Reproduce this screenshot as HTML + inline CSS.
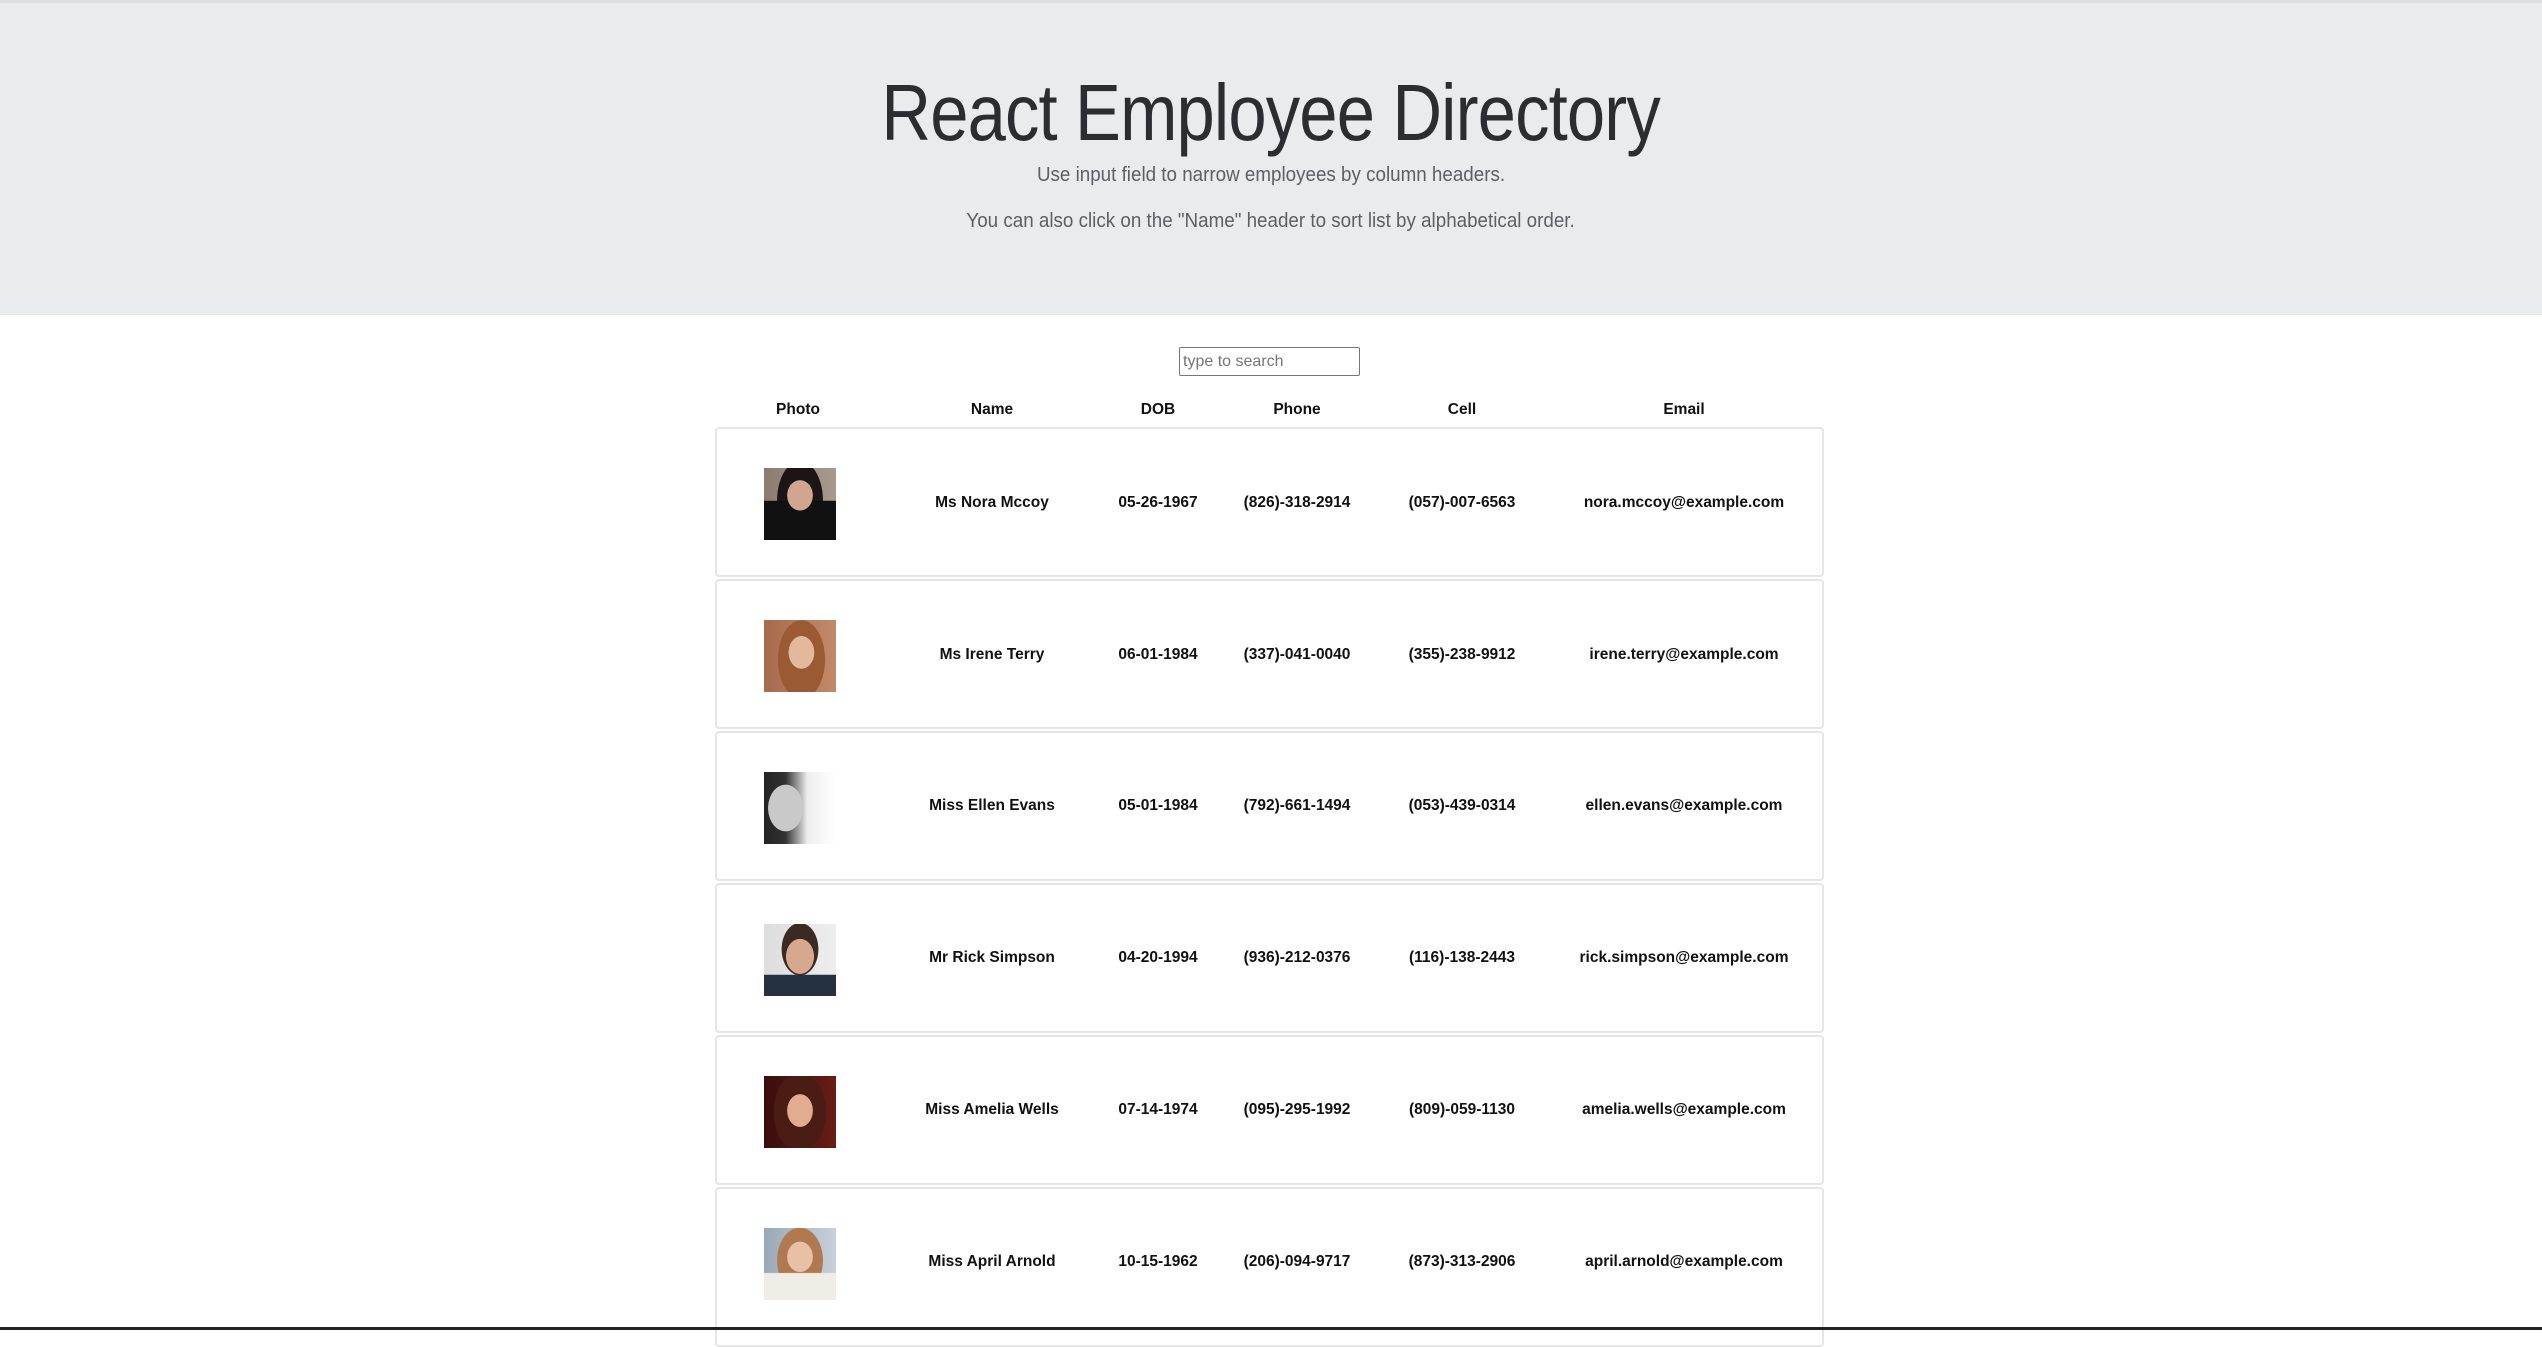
<!DOCTYPE html>
<html><head><meta charset="utf-8"><style>
*{margin:0;padding:0;box-sizing:border-box}
body{width:2542px;height:1330px;overflow:hidden;background:#fff;font-family:"Liberation Sans",sans-serif;color:#212529;position:relative}
.hd{position:absolute;left:0;top:0;width:2542px;height:315px;background:#e9ecef;border-top:3px solid #dcdfe3}
.t{position:absolute;left:0;width:2542px;text-align:center;white-space:nowrap}
h1{display:inline-block;font-size:80px;font-weight:300;color:#2a2d31;letter-spacing:-1px;transform:scaleX(0.86)}
.s{font-size:20px;color:#5a6066}
.s span{display:inline-block;transform:scaleX(0.94)}
input{position:absolute;left:1179px;top:347px;width:181px;height:29px;border:1px solid #767676;border-radius:2px;font:16px "Liberation Sans",sans-serif;padding-left:3px;color:#757575}
.c{position:absolute;transform:translate(-50%,-50%);font-weight:bold;font-size:15.5px;white-space:nowrap;color:#111}
.row{position:absolute;left:715px;width:1109px;height:150px;border:2px solid #e6e6e6;border-radius:4px}
.p{position:absolute;left:47px;top:39px;width:72px;height:72px}
.bl{position:absolute;left:0;bottom:0;width:2542px;height:3px;background:#222}
</style></head><body>
<div class="hd"></div>
<div class="t" style="top:67px"><h1>React Employee Directory</h1></div>
<div class="t s" style="top:164px"><span>Use input field to narrow employees by column headers.</span></div>
<div class="t s" style="top:210px"><span>You can also click on the "Name" header to sort list by alphabetical order.</span></div>
<input value="type to search">
<div class="c" style="left:798px;top:410px">Photo</div>
<div class="c" style="left:992px;top:410px">Name</div>
<div class="c" style="left:1158px;top:410px">DOB</div>
<div class="c" style="left:1297px;top:410px">Phone</div>
<div class="c" style="left:1462px;top:410px">Cell</div>
<div class="c" style="left:1684px;top:410px">Email</div>

<div class="row" style="top:427px"><div class="p" style="background-image:radial-gradient(ellipse 22% 26% at 50% 38%,#d2a58e 80%,transparent 82%),linear-gradient(180deg,transparent 45%,#111 46%),radial-gradient(ellipse 35% 60% at 50% 45%,#1b1515 90%,transparent 92%),linear-gradient(90deg,#8c7c70,#a89a8c)"></div></div>
<div class="row" style="top:579px"><div class="p" style="background-image:radial-gradient(ellipse 22% 28% at 52% 45%,#e3b99c 80%,transparent 82%),radial-gradient(ellipse 36% 60% at 52% 55%,#9a5a34 90%,transparent 92%),linear-gradient(90deg,#a86a4c,#c28a6a)"></div></div>
<div class="row" style="top:731px"><div class="p" style="background-image:radial-gradient(ellipse 30% 40% at 30% 50%,#c9c9c9 80%,transparent 82%),linear-gradient(90deg,#222 0,#333 30%,#eee 60%,#fff)"></div></div>
<div class="row" style="top:883px"><div class="p" style="background-image:radial-gradient(ellipse 24% 30% at 50% 45%,#d8a88e 80%,transparent 82%),linear-gradient(180deg,transparent 70%,#253040 71%),radial-gradient(ellipse 28% 40% at 50% 35%,#3a2a22 90%,transparent 92%),linear-gradient(90deg,#ddd,#eee)"></div></div>
<div class="row" style="top:1035px"><div class="p" style="background-image:radial-gradient(ellipse 22% 28% at 50% 48%,#e0ad90 80%,transparent 82%),radial-gradient(ellipse 40% 60% at 50% 50%,#4a1c14 90%,transparent 92%),linear-gradient(90deg,#3a0e0c,#6a1c18)"></div></div>
<div class="row" style="top:1187px;height:160px"><div class="p" style="background-image:radial-gradient(ellipse 22% 26% at 50% 40%,#e8c0a5 80%,transparent 82%),linear-gradient(180deg,transparent 62%,#f0ece6 63%),radial-gradient(ellipse 35% 50% at 50% 45%,#b07a50 90%,transparent 92%),linear-gradient(90deg,#9aa8b8,#c8d0da)"></div></div>

<div class="c" style="left:992px;top:503px">Ms Nora Mccoy</div><div class="c" style="left:1158px;top:503px">05-26-1967</div><div class="c" style="left:1297px;top:503px">(826)-318-2914</div><div class="c" style="left:1462px;top:503px">(057)-007-6563</div><div class="c" style="left:1684px;top:503px">nora.mccoy@example.com</div>
<div class="c" style="left:992px;top:655px">Ms Irene Terry</div><div class="c" style="left:1158px;top:655px">06-01-1984</div><div class="c" style="left:1297px;top:655px">(337)-041-0040</div><div class="c" style="left:1462px;top:655px">(355)-238-9912</div><div class="c" style="left:1684px;top:655px">irene.terry@example.com</div>
<div class="c" style="left:992px;top:806px">Miss Ellen Evans</div><div class="c" style="left:1158px;top:806px">05-01-1984</div><div class="c" style="left:1297px;top:806px">(792)-661-1494</div><div class="c" style="left:1462px;top:806px">(053)-439-0314</div><div class="c" style="left:1684px;top:806px">ellen.evans@example.com</div>
<div class="c" style="left:992px;top:958px">Mr Rick Simpson</div><div class="c" style="left:1158px;top:958px">04-20-1994</div><div class="c" style="left:1297px;top:958px">(936)-212-0376</div><div class="c" style="left:1462px;top:958px">(116)-138-2443</div><div class="c" style="left:1684px;top:958px">rick.simpson@example.com</div>
<div class="c" style="left:992px;top:1110px">Miss Amelia Wells</div><div class="c" style="left:1158px;top:1110px">07-14-1974</div><div class="c" style="left:1297px;top:1110px">(095)-295-1992</div><div class="c" style="left:1462px;top:1110px">(809)-059-1130</div><div class="c" style="left:1684px;top:1110px">amelia.wells@example.com</div>
<div class="c" style="left:992px;top:1262px">Miss April Arnold</div><div class="c" style="left:1158px;top:1262px">10-15-1962</div><div class="c" style="left:1297px;top:1262px">(206)-094-9717</div><div class="c" style="left:1462px;top:1262px">(873)-313-2906</div><div class="c" style="left:1684px;top:1262px">april.arnold@example.com</div>
<div class="bl"></div>
</body></html>
